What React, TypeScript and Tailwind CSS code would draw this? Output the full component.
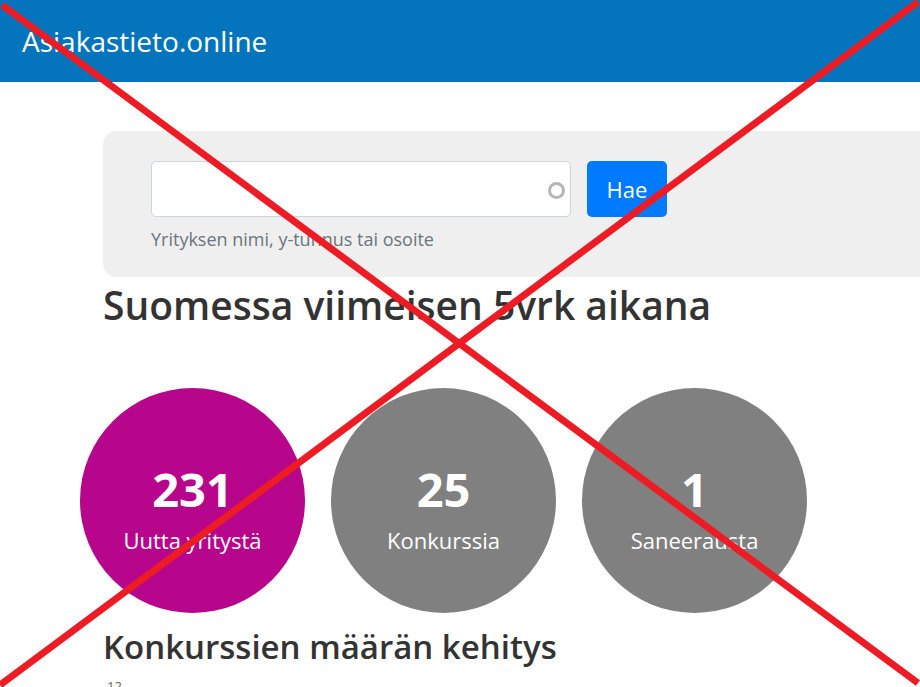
import React from 'react';

const stats = [
  { value: '231', label: 'Uutta yritystä', color: 'bg-[#b8068c]' },
  { value: '25', label: 'Konkurssia', color: 'bg-[#808080]' },
  { value: '1', label: 'Saneerausta', color: 'bg-[#808080]' },
];

const App: React.FC = () => {
  return (
    <div className="relative h-[687px] w-[920px] overflow-hidden bg-white text-[#333] font-['Open_Sans',sans-serif]">
      <header className="h-[82px] bg-[#0475bd] flex items-center pl-[22px]">
        <span className="text-white text-[28px] leading-none">Asiakastieto.online</span>
      </header>

      <main className="pl-[103px] pt-[49px]">
        <div className="w-[880px] h-[146px] rounded-[14px] bg-[#efefef] pl-[48px] pt-[30px]">
          <div className="flex items-center gap-4">
            <div className="relative w-[420px] h-[56px] bg-white border border-[#ced4da] rounded-[5px]">
              <div className="absolute right-[5px] top-[20px] w-[17px] h-[17px] rounded-full border-[3px] border-[#b5b5b5]" />
            </div>
            <button className="w-[80px] h-[56px] rounded-[5px] bg-[#007bff] text-white text-[22px]">Hae</button>
          </div>
          <p className="mt-[9px] text-[18px] text-[#6c757d]">Yrityksen nimi, y-tunnus tai osoite</p>
        </div>

        <h1 className="mt-[4px] text-[39px] leading-[48px] font-semibold text-[#333]">Suomessa viimeisen 5vrk aikana</h1>

        <div className="mt-[59px] -ml-[23px] flex gap-[26px]">
          {stats.map((s) => (
            <div
              key={s.label}
              className={`${s.color} w-[225px] h-[225px] rounded-full flex flex-col items-center justify-center pt-[20px] text-white`}
            >
              <span className="text-[47px] font-bold leading-[52px] -mt-[4px]">{s.value}</span>
              <span className="text-[22px] leading-[30px] mt-[10px]">{s.label}</span>
            </div>
          ))}
        </div>

        <h2 className="mt-[14px] text-[33px] leading-[40px] font-semibold text-[#333]">Konkurssien määrän kehitys</h2>
        <p className="mt-[10px] ml-[4px] text-[13px] text-[#666]">12</p>
      </main>

      <svg className="absolute inset-0 pointer-events-none" width="920" height="687" viewBox="0 0 920 687">
        <line x1="2" y1="5" x2="918" y2="683" stroke="#ed1c24" strokeWidth="7" />
        <line x1="918" y1="2" x2="0" y2="685" stroke="#ed1c24" strokeWidth="7" />
      </svg>
    </div>
  );
};

export default App;
